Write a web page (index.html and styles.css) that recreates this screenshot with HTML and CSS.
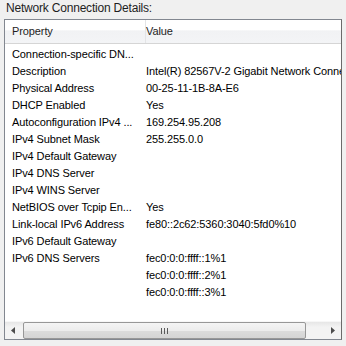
FILE: index.html
```html
<!DOCTYPE html>
<html lang="en">
<head>
    <meta charset="UTF-8">
    <title>Network Connection Details</title>
    <link rel="stylesheet" href="styles.css">
</head>
<body>
    <div class="dialog">
        <div class="title">Network Connection Details:</div>
        <div class="listview">
            <div class="header">
                <div class="col col-prop">Property</div>
                <div class="col col-val">Value</div>
            </div>
            <div class="rows">
                <div class="row"><span class="prop">Connection-specific DN...</span><span class="val"></span></div>
                <div class="row"><span class="prop">Description</span><span class="val">Intel(R) 82567V-2 Gigabit Network Connection</span></div>
                <div class="row"><span class="prop">Physical Address</span><span class="val">00-25-11-1B-8A-E6</span></div>
                <div class="row"><span class="prop">DHCP Enabled</span><span class="val">Yes</span></div>
                <div class="row"><span class="prop">Autoconfiguration IPv4 ...</span><span class="val">169.254.95.208</span></div>
                <div class="row"><span class="prop">IPv4 Subnet Mask</span><span class="val">255.255.0.0</span></div>
                <div class="row"><span class="prop">IPv4 Default Gateway</span><span class="val"></span></div>
                <div class="row"><span class="prop">IPv4 DNS Server</span><span class="val"></span></div>
                <div class="row"><span class="prop">IPv4 WINS Server</span><span class="val"></span></div>
                <div class="row"><span class="prop">NetBIOS over Tcpip En...</span><span class="val">Yes</span></div>
                <div class="row"><span class="prop">Link-local IPv6 Address</span><span class="val">fe80::2c62:5360:3040:5fd0%10</span></div>
                <div class="row"><span class="prop">IPv6 Default Gateway</span><span class="val"></span></div>
                <div class="row"><span class="prop">IPv6 DNS Servers</span><span class="val">fec0:0:0:ffff::1%1</span></div>
                <div class="row"><span class="prop"></span><span class="val">fec0:0:0:ffff::2%1</span></div>
                <div class="row"><span class="prop"></span><span class="val">fec0:0:0:ffff::3%1</span></div>
            </div>
            <div class="hscroll">
                <div class="arrow">
                    <svg width="5" height="7" viewBox="0 0 5 7"><path d="M4 0 L0 3.5 L4 7 Z" fill="#4d4d4d"/></svg>
                </div>
                <div class="track">
                    <div class="thumb">
                        <span class="grip"></span><span class="grip"></span><span class="grip"></span>
                    </div>
                </div>
                <div class="arrow">
                    <svg width="5" height="7" viewBox="0 0 5 7"><path d="M1 0 L5 3.5 L1 7 Z" fill="#4d4d4d"/></svg>
                </div>
            </div>
        </div>
    </div>
</body>
</html>
```

FILE: styles.css
```css
body {
    margin: 0;
    padding: 0;
    background-color: #f0f0f0;
    font-family: "Liberation Sans", Arial, sans-serif;
    font-size: 11px;
    letter-spacing: -0.1px;
    color: #000;
}
.dialog {
    width: 346px;
    height: 346px;
    padding-top: 1px;
    box-sizing: border-box;
}
.title {
    padding-left: 6px;
    height: 18px;
    line-height: 15px;
    font-size: 12px;
    letter-spacing: -0.2px;
    color: #1e1e1e;
}
.listview {
    margin-left: 4px;
    width: 338px;
    height: 321px;
    border: 1px solid #828790;
    border-right-color: #6b6b6b;
    background-color: #fff;
    box-sizing: border-box;
    display: flex;
    flex-direction: column;
    overflow: hidden;
}
.header {
    display: flex;
    height: 23px;
    flex-shrink: 0;
    background: linear-gradient(#ffffff, #ffffff 45%, #f1f2f4 46%, #f3f4f6);
    border-bottom: 1px solid #d5d5d5;
}
.col {
    line-height: 23px;
    color: #1e1e1e;
}
.col-prop {
    width: 133px;
    padding-left: 7px;
    border-right: 1px solid #e3e4e6;
}
.col-val {
    padding-left: 0;
}
.rows {
    flex: 1;
    padding-top: 2px;
    overflow: hidden;
}
.row {
    display: flex;
    height: 17px;
    line-height: 17px;
    white-space: nowrap;
}
.prop {
    width: 134px;
    flex-shrink: 0;
    padding-left: 7px;
    overflow: hidden;
}
.val {
    padding-left: 0;
}
.hscroll {
    display: flex;
    height: 17px;
    flex-shrink: 0;
    background: linear-gradient(#e6e6e6, #f3f3f3 30%, #f3f3f3);
    border-top: 1px solid #f7f7f7;
}
.arrow {
    width: 17px;
    display: flex;
    align-items: center;
    justify-content: center;
}
.track {
    flex: 1;
    padding: 0 1px;
    display: flex;
}
.thumb {
    width: 283px;
    box-sizing: border-box;
    border: 1px solid #979797;
    border-radius: 2px;
    background: linear-gradient(#f4f4f4, #ececec 50%, #dcdcdc 51%, #d4d4d4);
    display: flex;
    justify-content: center;
    align-items: center;
    gap: 2px;
}
.grip {
    width: 1px;
    height: 6px;
    background-color: #5a5a5a;
}
```
